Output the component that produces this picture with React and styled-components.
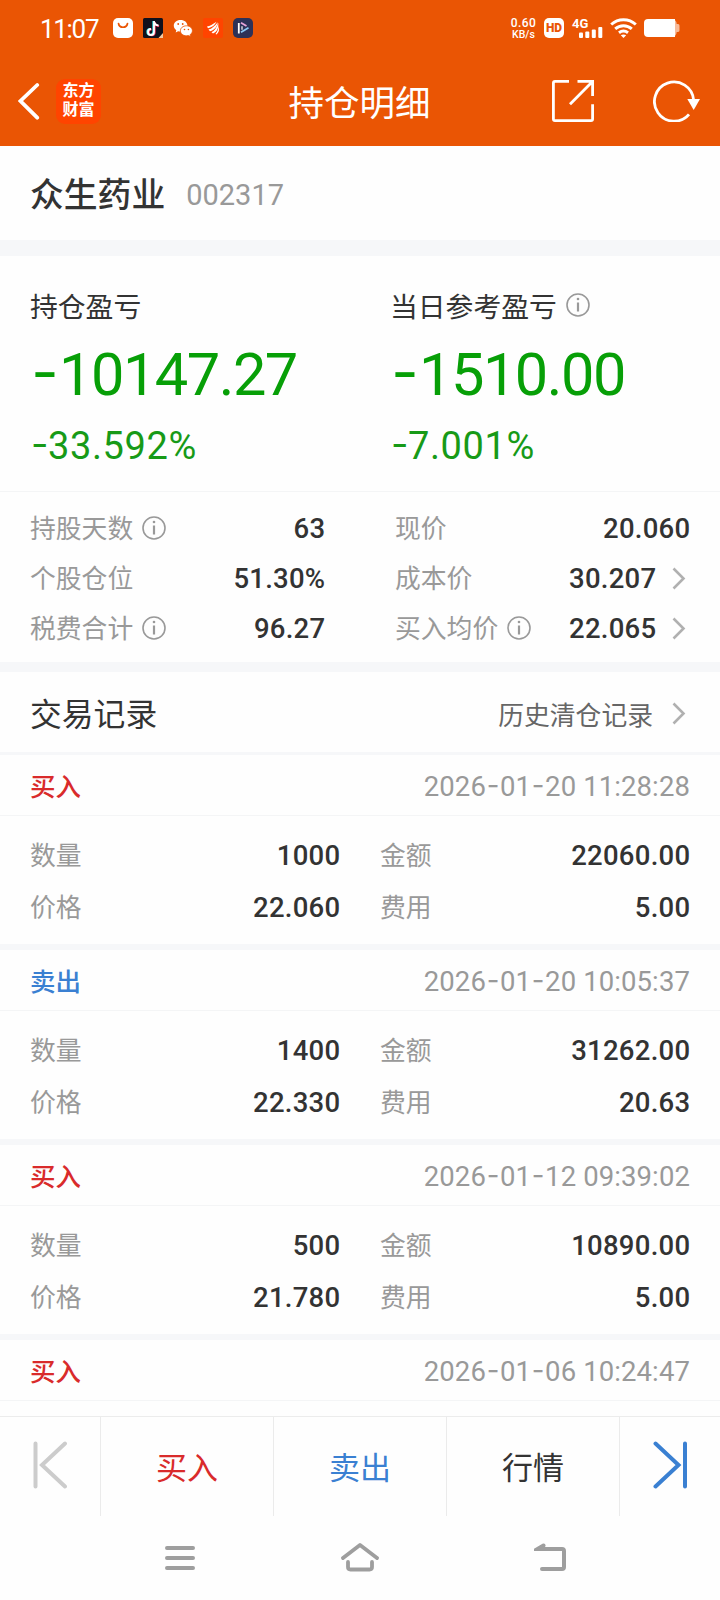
import React from 'react'
import styled, { createGlobalStyle } from 'styled-components'

const GlobalStyle = createGlobalStyle`
  * {
    box-sizing: border-box;
  }

  body {
    margin: 0;
    background: #fefefe;
    color: #333;
    font-family: Roboto, "Noto Sans CJK SC", sans-serif;
    overflow: hidden;
  }
`

const Screen = styled.div`
  display: flex;
  flex-direction: column;
  width: 720px;
  height: 1600px;
  overflow: hidden;
`

const Header = styled.header`
  height: 146px;
  flex: none;
  background: #ea5504;
  color: #fff;
`

const StatusBar = styled.div`
  display: flex;
  align-items: center;
  justify-content: space-between;
  height: 56px;
  padding: 0 39px 0 40px;
`

const StatusGroup = styled.div`
  display: flex;
  align-items: center;
  gap: ${props => props.$gap}px;
`

const Clock = styled.span`
  width: 63px;
  padding-top: 1px;
  font-size: 26px;
  line-height: 30px;
  letter-spacing: -1.3px;
`

const NetSpeed = styled.div`
  display: flex;
  flex-direction: column;
  align-items: center;
  width: 27px;
  font-size: 10.5px;
  font-weight: 500;
  line-height: 9px;
  white-space: nowrap;
`

const SpeedValue = styled.div`
  margin-bottom: 1px;
  font-size: 12px;
  line-height: 11px;
  letter-spacing: 0.4px;
`

const HdBadge = styled.div`
  width: 20px;
  height: 20px;
  border-radius: 5px;
  background: #fff;
  color: #ea5504;
  font-size: 12px;
  font-weight: 900;
  line-height: 20px;
  text-align: center;
`

const TitleBar = styled.div`
  display: grid;
  grid-template-columns: 1fr auto 1fr;
  align-items: center;
  height: 90px;
  padding: 0 19px 0 18px;
`

const TitleLeft = styled.div`
  display: flex;
  align-items: center;
  gap: 16px;
`

const TitleRight = styled.div`
  display: flex;
  align-items: center;
  justify-content: flex-end;
  gap: 59px;
`

const Title = styled.h1`
  margin: 0;
  padding-top: 5px;
  font-size: 35.5px;
  font-weight: 400;
  line-height: 50px;
`

const Logo = styled.div`
  width: 45px;
  height: 45px;
  padding-top: 1px;
  border-radius: 9px;
  background: #ff4400;
  font-family: "Noto Sans CJK SC", sans-serif;
  font-size: 16px;
  font-weight: 700;
  line-height: 19px;
  text-align: center;
`

const Band = styled.div`
  flex: none;
  height: ${props => props.$size}px;
  background: #f6f7f9;
`

const StockRow = styled.div`
  display: flex;
  align-items: center;
  gap: 21px;
  height: 94px;
  flex: none;
  padding: 4px 30px 0;
`

const StockName = styled.span`
  padding-top: 2px;
  font-size: 33.8px;
  font-weight: 500;
  line-height: 48px;
`

const StockCode = styled.span`
  color: #999;
  font-size: 29px;
`

const ProfitRow = styled.div`
  display: grid;
  grid-template-columns: 360px 1fr;
  height: 235px;
  flex: none;
  padding: 29px 30px 0;
`

const ProfitTitle = styled.div`
  display: flex;
  align-items: center;
  gap: 9px;
  height: 40px;
  font-size: 27.8px;
`

const ProfitAmount = styled.div`
  height: 98px;
  padding-left: 1px;
  color: #079f07;
  font-size: 59.5px;
  line-height: 101px;
  letter-spacing: -1.5px;
  white-space: nowrap;
`

const ProfitRate = styled.div`
  padding-left: 1px;
  color: #179a17;
  font-size: 38px;
  line-height: 46px;
  letter-spacing: 0.6px;
`

const Hyphen = styled.span`
  display: inline-block;
  width: ${props => props.$width};
  font-family: Inter, sans-serif;
  line-height: 1;
  text-align: center;
  letter-spacing: 0;
  vertical-align: 0.04em;
`

const Stats = styled.div`
  display: grid;
  grid-template-columns: 295px 295px;
  column-gap: 70px;
  align-content: start;
  height: 171px;
  flex: none;
  padding: 12px 30px 0;
  border-top: 1px solid #f4f5f6;
`

const Cell = styled.div`
  display: flex;
  align-items: center;
  height: ${props => props.$height}px;
`

const Label = styled.span`
  display: flex;
  align-items: center;
  gap: 9px;
  color: #999;
  font-size: 25.8px;
  line-height: 40px;

  svg {
    margin-bottom: 3px;
  }
`

const Value = styled.span`
  margin-left: auto;
  margin-right: -0.3px;
  padding-bottom: 1px;
  font-size: 27.5px;
  font-weight: 500;
  letter-spacing: 0.25px;
`

const RecordsTitle = styled.div`
  display: flex;
  align-items: center;
  justify-content: space-between;
  height: 80px;
  flex: none;
  padding: 0 30px 1px;
  font-size: 31.8px;
`

const HistoryLink = styled.span`
  display: flex;
  align-items: center;
  gap: 3px;
  padding-top: 4px;
  color: #666;
  font-size: 25.8px;
`

const Records = styled.div`
  height: 661px;
  flex: none;
  overflow: hidden;
`

const RecordHead = styled.div`
  display: flex;
  align-items: center;
  justify-content: space-between;
  height: 61px;
  padding: 3px 30px 0;
  border-bottom: 1px solid #f4f5f6;
`

const Side = styled.span`
  padding-bottom: 5px;
  color: ${props => props.$sell ? '#3a80d2' : '#d92b2b'};
  font-size: 25.5px;
  font-weight: 500;
`

const Time = styled.span`
  color: #999;
  font-size: 27.5px;
  letter-spacing: 0.1px;
`

const RecordBody = styled.div`
  display: grid;
  grid-template-columns: 310px 310px;
  column-gap: 40px;
  align-content: start;
  height: 128px;
  padding: 14px 30px 0;
`

const Toolbar = styled.div`
  display: grid;
  grid-template-columns: 101px 173px 173px 173px 1fr;
  height: 100px;
  flex: none;
  border-top: 1px solid #ececec;
`

const ToolButton = styled.button`
  display: flex;
  align-items: center;
  justify-content: center;
  padding: ${props => props.$icon ? '0 0 3px' : '0 0 2px 0'};
  border: 0;
  border-right: 1px solid #ebebeb;
  background: none;
  color: ${props => props.$color};
  font: inherit;
  font-size: 31px;

  &:last-child {
    border-right: 0;
  }
`

const NavBar = styled.div`
  display: grid;
  grid-template-columns: 180px 180px 1fr;
  align-items: center;
  height: 84px;
  padding: 0 153px 0 164px;

  svg:nth-child(2) {
    margin-left: -3px;
  }

  svg:last-child {
    margin-left: 10px;
  }
`

const InfoIcon = () => (
  <svg width="24" height="24" viewBox="0 0 24 24" fill="none" stroke="#999" strokeWidth="1.6">
    <circle cx="12" cy="12" r="11" />
    <path d="M12 9.500v9" strokeWidth="2.2" />
    <circle cx="12" cy="6" r="1.3" fill="#999" stroke="none" />
  </svg>
)

const Arrow = () => (
  <svg width="34" height="24" viewBox="0 0 34 24" fill="none" stroke="#b0b0b0" strokeWidth="2.6">
    <path d="M17.5 1.5l10 10-10 10" />
  </svg>
)

const BagIcon = () => (
  <svg width="20" height="20" viewBox="0 0 20 20">
    <rect width="20" height="20" rx="5" fill="#fff" />
    <path d="M5.5 5.5c.8 5 8.2 5 9 0" fill="none" stroke="#ea5504" strokeWidth="1.7" strokeLinecap="round" />
  </svg>
)

const TiktokIcon = () => (
  <svg width="20" height="20" viewBox="0 0 20 20" fill="none" strokeWidth="1.8">
    <rect width="20" height="20" rx="1.5" fill="#10101c" />
    <path d="M10.2 3v10.8a3 3 0 1 1-3-3M10.2 3.5c.5 2.5 2 3.6 4.3 3.7" stroke="#32dbe0" />
    <path d="M11.8 4v10.3a3 3 0 1 1-3-3M11.8 4.2c.5 2.5 2 3.7 4.3 3.8" stroke="#f0385f" />
    <path d="M11 3v11a3 3 0 1 1-3-3M11 3.5c.5 2.7 2 3.8 4.5 3.9" stroke="#fff" />
    <path d="M15.5 20l4.5-5v5z" fill="#f5c9a0" />
  </svg>
)

const WechatIcon = () => (
  <svg width="20" height="20" viewBox="0 0 20 20" fill="#fff">
    <path d="M7.5 2C3.5 2 .8 4.5.8 7.8c0 1.9 1 3.4 2.5 4.5l-.6 2.2 2.4-1.3c.8.2 1.6.3 2.4.3 4 0 6.900-2.5 6.900-5.8S11.5 2 7.5 2z" />
    <path d="M13.400 7.800c-3.500 0-6 2.200-6 5s2.500 5 6 5c.7 0 1.400-.1 2-.3l2.200 1.100-.5-1.900c1.400-.9 2.300-2.300 2.300-3.900 0-2.800-2.500-5-6-5z" stroke="#ea5504" strokeWidth=".8" />
    <g fill="#ea5504">
      <circle cx="5.2" cy="6" r=".9" />
      <circle cx="9.7" cy="6" r=".9" />
      <circle cx="11.5" cy="11.5" r=".8" />
      <circle cx="15.4" cy="11.5" r=".8" />
    </g>
  </svg>
)

const WingIcon = () => (
  <svg width="20" height="20" viewBox="0 0 20 20" fill="#fff">
    <rect width="20" height="20" rx="2" fill="#ff4400" />
    <path d="M4 8.500C7 8.200 9.500 6.500 13.500 3.800 12 7 9 9.600 5 10.200z" />
    <path d="M5.500 11.500c3.500-.8 6-3.300 9.300-7.300-.6 4.300-3.300 7.700-7.800 9z" />
    <path d="M8.500 14.300c3-1.500 5-4.300 6.800-9.300.4 5.500-1.500 9-5.300 10.500z" />
    <path d="M12.500 16c1.700-1.800 2.600-4 3.200-8 .8 3.700.3 6.500-2.200 8.500z" />
  </svg>
)

const PlayIcon = () => (
  <svg width="20" height="20" viewBox="0 0 20 20" fill="none" strokeWidth="1.8">
    <rect width="20" height="20" rx="5" fill="#2d3157" />
    <path d="M5.800 5v10.500" stroke="#fff" />
    <path d="M8 4.800l5.500 3.300" stroke="#e8a4da" />
    <path d="M8 14.200l7.500-4.500" stroke="#8cc8f4" />
    <path d="M9 8.200v3.600" stroke="#fff" strokeWidth="1.2" />
  </svg>
)

const SignalIcon = () => (
  <svg width="32" height="22" viewBox="0 0 32 22" fill="#fff">
    <text x="1" y="10.500" fontFamily="Roboto, sans-serif" fontSize="13" fontWeight="700">4G</text>
    <rect x="8" y="15.500" width="4" height="5.500" rx="1" />
    <rect x="14.300" y="14.500" width="4" height="6.500" rx="1" />
    <rect x="20.800" y="12.500" width="4" height="8.500" rx="1" />
    <rect x="27.300" y="10" width="4" height="11" rx="1" />
  </svg>
)

const WifiIcon = () => (
  <svg width="27" height="20" viewBox="0 0 27 20" fill="none" stroke="#fff" strokeWidth="3">
    <path d="M1.200 6.500c7-6.400 17.600-6.400 24.600 0" />
    <path d="M5.200 10.800c4.800-4.200 11.800-4.200 16.600 0" />
    <path d="M9 14.800c2.700-2.100 6.300-2.100 9 0" />
    <path d="M10.800 17.300c1.700-1 3.700-1 5.400 0L13.500 20z" fill="#fff" stroke="none" />
  </svg>
)

const BatteryIcon = () => (
  <svg width="37" height="18" viewBox="0 0 37 18">
    <path d="M5 0h23a5 5 0 0 1 4.700 5h1.300c1 0 1.500.8 1.500 2v4c0 1.200-.5 2-1.500 2h-1.300a5 5 0 0 1-4.700 5H5z" fill="#fff" opacity=".6" />
    <path d="M4 0h27v18H4a4 4 0 0 1-4-4V4a4 4 0 0 1 4-4z" fill="#fff" />
  </svg>
)

const BackIcon = () => (
  <svg width="22" height="38" viewBox="0 0 22 38" fill="none" stroke="#fff" strokeWidth="3.8" strokeLinecap="round">
    <path d="M19.200 3L2.500 19l16.700 16.700" />
  </svg>
)

const ShareIcon = () => (
  <svg width="42" height="42" viewBox="0 0 42 42" fill="none" stroke="#fff" strokeWidth="2.8">
    <path d="M17 1.400H3q-1.600 0-1.600 1.600v36q0 1.600 1.600 1.600h36q1.600 0 1.600-1.600V24.300" />
    <path d="M25.500 1.400h15.100v14.500M40 2L18 24.300" />
  </svg>
)

const RefreshIcon = () => (
  <svg width="48" height="42" viewBox="0 0 48 42" fill="none" stroke="#fff" strokeWidth="2.8">
    <path d="M36 34.300A19.600 19.600 0 1 1 40.600 20" />
    <path d="M34.300 19H47l-6.300 11z" fill="#fff" stroke="none" />
  </svg>
)

const SkipIcon = (props) => (
  <svg width="34" height="48" viewBox="0 0 34 48" fill="none" stroke={props.color} strokeWidth="4" strokeLinecap="round">
    {props.next
      ? <path d="M2.5 2.5L25.5 24 2.5 45.5M32 2.5v43" />
      : <path d="M32 2.5L9 24l23 21.5M2.5 2.5v43" />}
  </svg>
)

const MenuIcon = () => (
  <svg width="32" height="26" viewBox="0 0 32 26" stroke="#9e9e9e" strokeWidth="4" strokeLinecap="round">
    <path d="M3 3h26M3 13h26M3 23h26" />
  </svg>
)

const HomeIcon = () => (
  <svg width="38" height="30" viewBox="0 0 38 30" fill="none" stroke="#9e9e9e" strokeWidth="3.8" strokeLinecap="round" strokeLinejoin="round">
    <path d="M2 15L19 2 36 15" />
    <path d="M7 19v5q0 2.500 2.500 2.500h19q2.500 0 2.500-2.500v-5" />
  </svg>
)

const ReturnIcon = () => (
  <svg width="33" height="30" viewBox="0 0 33 30" fill="none" stroke="#9e9e9e" strokeWidth="4" strokeLinecap="round">
    <path d="M9.500 2.500L3.500 6H28q2 0 2 2v16q0 2-2 2H8" />
  </svg>
)

const Num = (props) => <>
  {props.children.split('-').map((part, i) => <React.Fragment key={i}>
    {i > 0 && <Hyphen $width={props.hyphen}>-</Hyphen>}
    {part}
  </React.Fragment>)}
</>

const profits = [
  { title: '持仓盈亏', amount: '-10147.27', rate: '-33.592%' },
  { title: '当日参考盈亏', amount: '-1510.00', rate: '-7.001%', info: true },
]

const stats = [
  { label: '持股天数', value: '63', info: true },
  { label: '现价', value: '20.060' },
  { label: '个股仓位', value: '51.30%' },
  { label: '成本价', value: '30.207', arrow: true },
  { label: '税费合计', value: '96.27', info: true },
  { label: '买入均价', value: '22.065', info: true, arrow: true },
]

const records = [
  { side: '买入', time: '2026-01-20 11:28:28', count: '1000', amount: '22060.00', price: '22.060', fee: '5.00' },
  { side: '卖出', time: '2026-01-20 10:05:37', count: '1400', amount: '31262.00', price: '22.330', fee: '20.63' },
  { side: '买入', time: '2026-01-12 09:39:02', count: '500', amount: '10890.00', price: '21.780', fee: '5.00' },
  { side: '买入', time: '2026-01-06 10:24:47' },
]

const Field = (props) => <Cell $height={props.height}>
  <Label>
    {props.label}
    {props.info && <InfoIcon />}
  </Label>
  <Value>{props.value}</Value>
  {props.arrow && <Arrow />}
</Cell>

const Record = ({ record }) => <div>
  <RecordHead>
    <Side $sell={record.side === '卖出'}>{record.side}</Side>
    <Time><Num hyphen="14px">{record.time}</Num></Time>
  </RecordHead>
  {record.count && <>
    <RecordBody>
      <Field height={52} label="数量" value={record.count} />
      <Field height={52} label="金额" value={record.amount} />
      <Field height={52} label="价格" value={record.price} />
      <Field height={52} label="费用" value={record.fee} />
    </RecordBody>
    <Band $size={6} />
  </>}
</div>

const App = () => {
  return <Screen>
    <GlobalStyle />
    <Header>
      <StatusBar>
        <StatusGroup $gap={10}>
          <Clock>11:07</Clock>
          <BagIcon />
          <TiktokIcon />
          <WechatIcon />
          <WingIcon />
          <PlayIcon />
        </StatusGroup>
        <StatusGroup $gap={7}>
          <NetSpeed>
            <SpeedValue>0.60</SpeedValue>
            KB/s
          </NetSpeed>
          <HdBadge>HD</HdBadge>
          <SignalIcon />
          <WifiIcon />
          <BatteryIcon />
        </StatusGroup>
      </StatusBar>
      <TitleBar>
        <TitleLeft>
          <BackIcon />
          <Logo>东方<br />财富</Logo>
        </TitleLeft>
        <Title>持仓明细</Title>
        <TitleRight>
          <ShareIcon />
          <RefreshIcon />
        </TitleRight>
      </TitleBar>
    </Header>
    <StockRow>
      <StockName>众生药业</StockName>
      <StockCode>002317</StockCode>
    </StockRow>
    <Band $size={16} />
    <ProfitRow>
      {profits.map((p) => <div key={p.title}>
        <ProfitTitle>{p.title}{p.info && <InfoIcon />}</ProfitTitle>
        <ProfitAmount><Num hyphen="28px">{p.amount}</Num></ProfitAmount>
        <ProfitRate><Num hyphen="17px">{p.rate}</Num></ProfitRate>
      </div>)}
    </ProfitRow>
    <Stats>
      {stats.map((s) => <Field key={s.label} height={50} {...s} />)}
    </Stats>
    <Band $size={10} />
    <RecordsTitle>
      交易记录
      <HistoryLink>历史清仓记录<Arrow /></HistoryLink>
    </RecordsTitle>
    <Band $size={3} />
    <Records>
      {records.map((r) => <Record key={r.time} record={r} />)}
    </Records>
    <Toolbar>
      <ToolButton $icon><SkipIcon color="#ccc" /></ToolButton>
      <ToolButton $color="#d92b2b">买入</ToolButton>
      <ToolButton $color="#3a80d2">卖出</ToolButton>
      <ToolButton $color="#333">行情</ToolButton>
      <ToolButton $icon><SkipIcon color="#3a80d2" next /></ToolButton>
    </Toolbar>
    <NavBar>
      <MenuIcon />
      <HomeIcon />
      <ReturnIcon />
    </NavBar>
  </Screen>
}

export default App
